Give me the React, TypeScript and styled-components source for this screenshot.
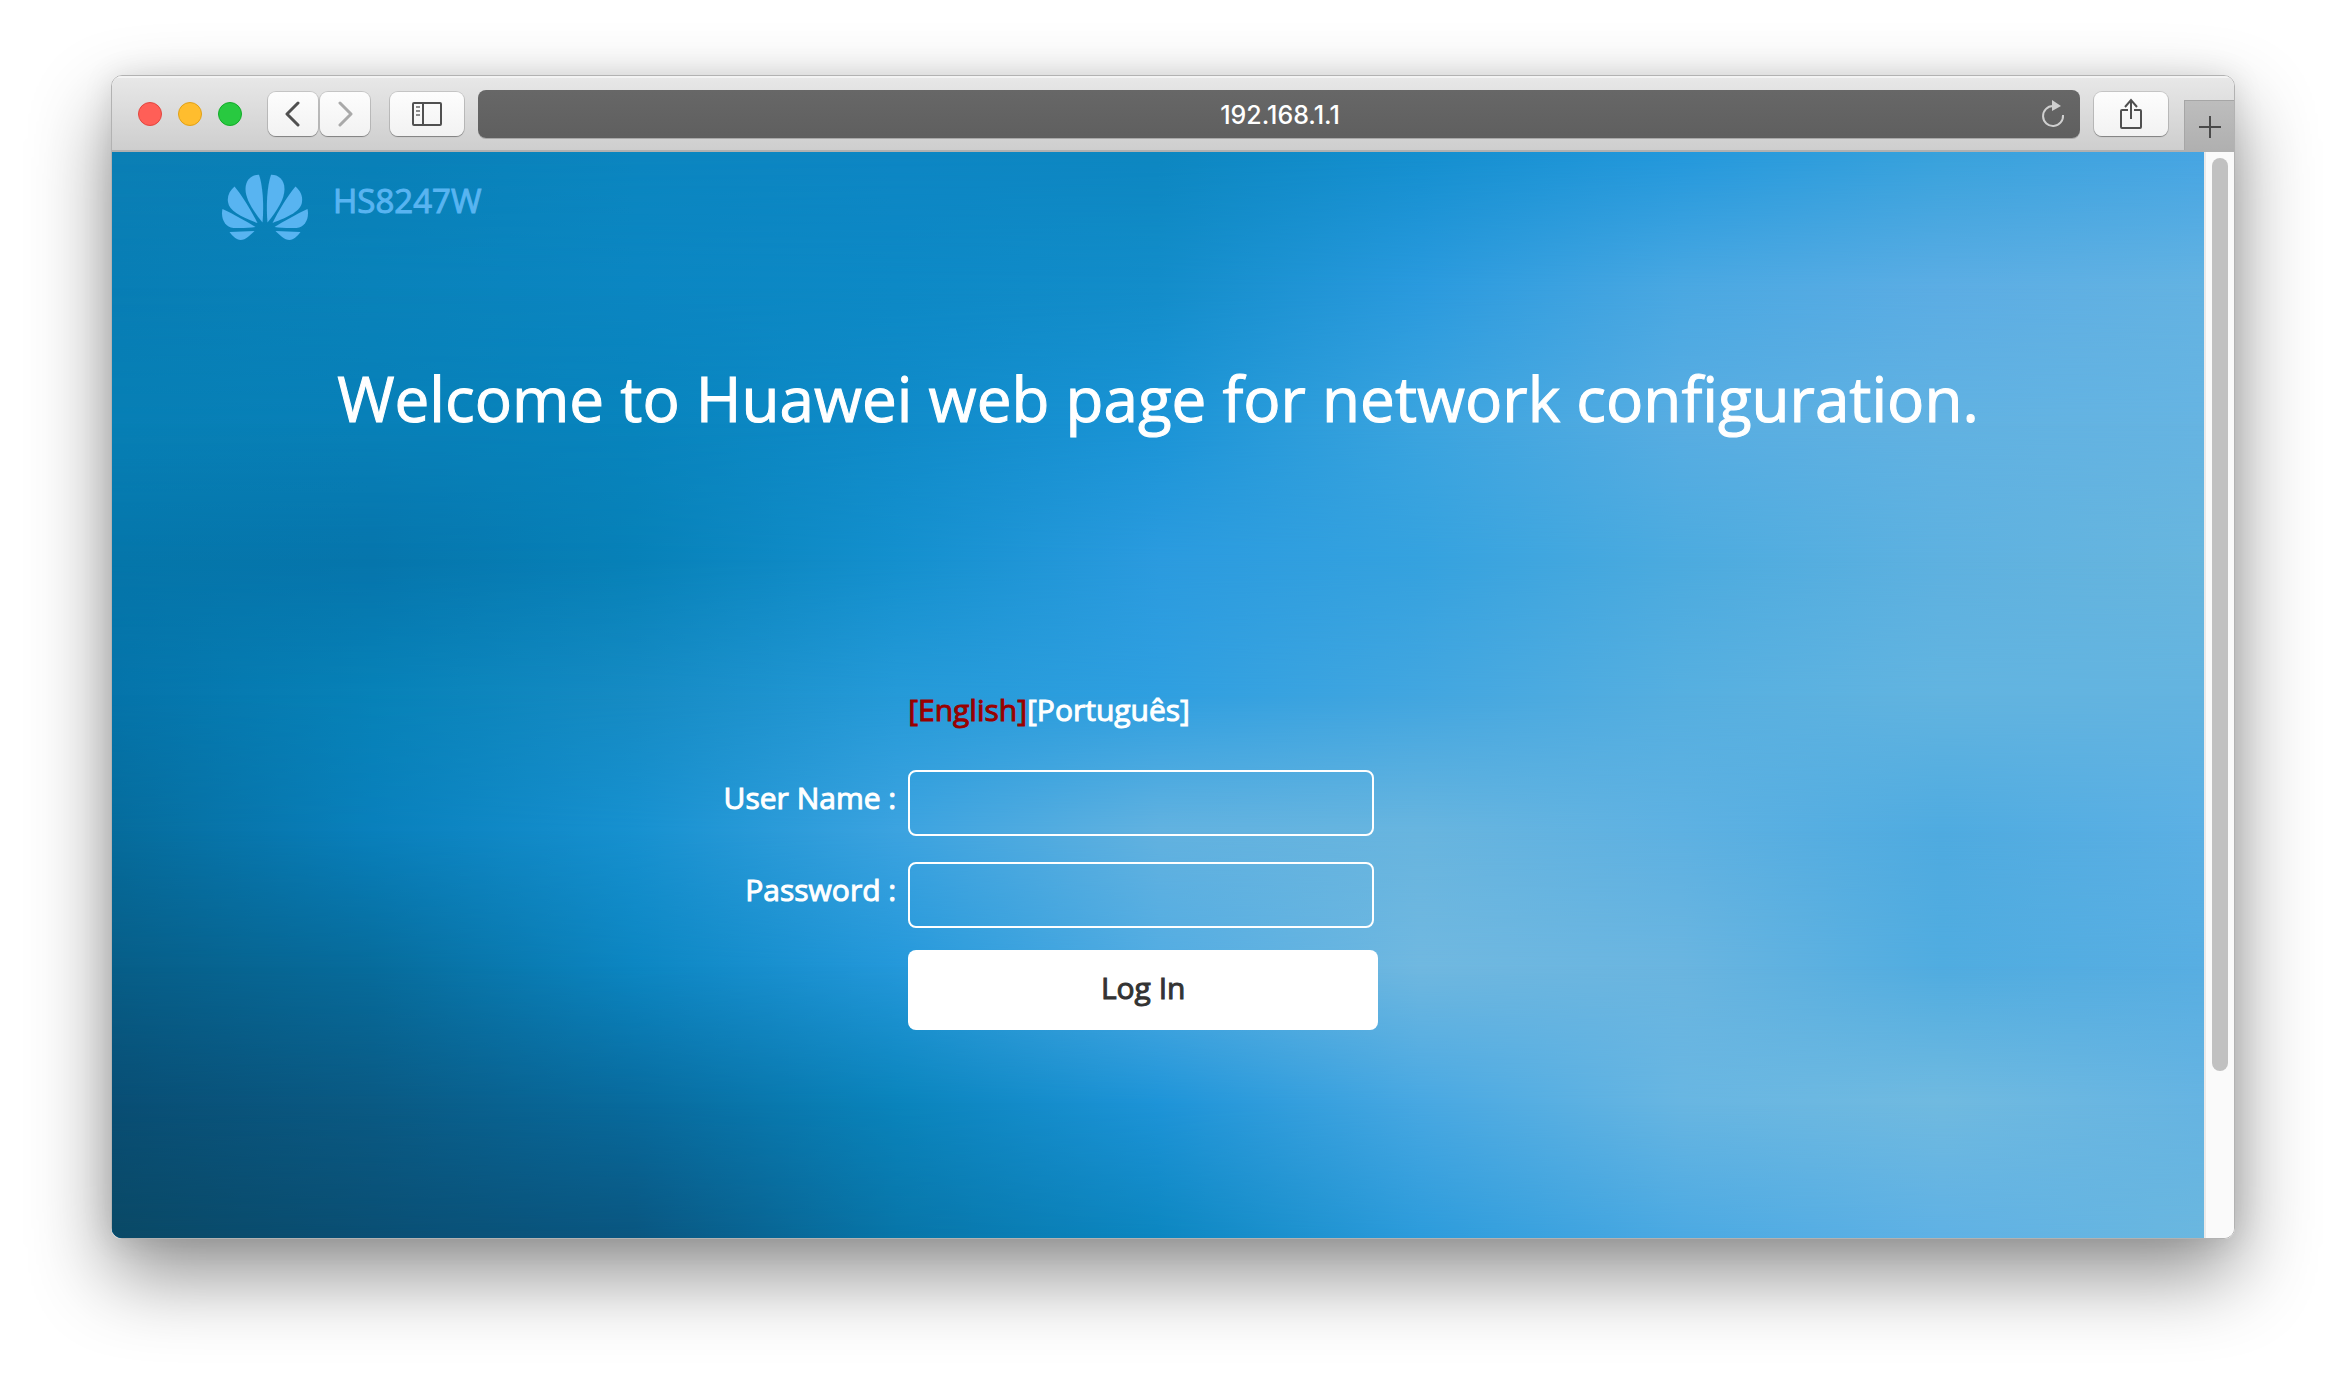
import React from "react";
import styled, { createGlobalStyle } from "styled-components";

const GlobalStyle = createGlobalStyle`
  *, *::before, *::after { box-sizing: border-box; }
  html, body { margin: 0; background: #ffffff; }
  button, input { font: inherit; color: inherit; }
`;

/* Colour mesh behind the login page: every row holds evenly spaced stops. */
const mesh: string[][] = [
  ["#0b7fb5", "#0980b8", "#0b86c0", "#0d86c4", "#0d87c1", "#148fcf", "#2398dc", "#38a2dc", "#46a5e3"],
  ["#087eb5", "#0982ba", "#0b86c2", "#0d89c6", "#138dca", "#2a9ade", "#4aa8e2", "#5cade4", "#64b3e2"],
  ["#077fb5", "#0880b8", "#0884bd", "#108bc9", "#1b94d6", "#3ba4df", "#58ade2", "#61b2e2", "#66b4e2"],
  ["#0576aa", "#0675ac", "#0781b8", "#1490ce", "#2b9bdf", "#35a2df", "#4cabdf", "#5eb1e0", "#68b6de"],
  ["#0574aa", "#0782b8", "#168bc4", "#259ad8", "#2f9fe0", "#42a6e0", "#56afe0", "#62b4e0", "#64b4e0"],
  ["#066c9c", "#0980bc", "#1791d0", "#3ca3e0", "#62b2e0", "#68b5df", "#5eb1e2", "#4fabe0", "#5cb0e4"],
  ["#075e88", "#076c9c", "#0c86c2", "#2498da", "#52ace2", "#70b8e0", "#6ab5e0", "#50ace0", "#58aee2"],
  ["#094e74", "#0a5a84", "#086b9e", "#0a84bc", "#1e94d8", "#48a8e2", "#68b6e2", "#70bae0", "#66b4e2"],
  ["#0a4966", "#0a4f74", "#0a5680", "#0875a8", "#0c86c0", "#2c9bdb", "#4ba9e2", "#5fb1e4", "#6ab7df"],
];

const Desktop = styled.main`
  display: flex;
  min-height: 100vh;
  padding: 75px 111px 147px;
  background: #ffffff;
`;

const BrowserWindow = styled.section`
  flex: 1;
  min-width: 0;
  display: flex;
  flex-direction: column;
  overflow: hidden;
  border: 1px solid #b2b2b2;
  border-radius: 11px;
  box-shadow: 0 36px 80px rgba(0, 0, 0, 0.44), 0 0 30px rgba(0, 0, 0, 0.1);
`;

const Toolbar = styled.header`
  display: flex;
  align-items: center;
  height: 76px;
  padding: 2px 0 0 26px;
  background: linear-gradient(#e8e8e8, #cecece);
  border-bottom: 2px solid #b0b0b0;
  box-shadow: inset 0 2px 0 #f3f3f3;
`;

const Lights = styled.div`
  display: flex;
  gap: 16px;
  margin-right: 26px;
`;

const Light = styled.button<{ $fill: string; $edge: string }>`
  width: 24px;
  height: 24px;
  padding: 0;
  border: 1px solid ${(p) => p.$edge};
  border-radius: 50%;
  background: ${(p) => p.$fill};
`;

const NavGroup = styled.nav`
  display: flex;
  gap: 2px;
  margin-right: 20px;
`;

const ToolButton = styled.button<{ $width: number }>`
  display: flex;
  align-items: center;
  justify-content: center;
  width: ${(p) => p.$width}px;
  height: 44px;
  padding: 0;
  border: 0;
  border-radius: 8px;
  color: #505050;
  background: linear-gradient(#fdfdfd, #f2f2f2);
  box-shadow: 0 0 0 1px rgba(0, 0, 0, 0.13), 0 1px 1px rgba(0, 0, 0, 0.3);

  &:disabled { color: #a9a9a9; }
`;

const AddressBar = styled.div`
  flex: 1;
  display: flex;
  align-items: center;
  height: 48px;
  margin: 0 14px;
  padding: 0 12px 0 44px;
  border-radius: 8px;
  color: #ffffff;
  background: linear-gradient(#676767, #5f5f5f);
  box-shadow: 0 1px 0 rgba(0, 0, 0, 0.2);
`;

const AddressInput = styled.input`
  flex: 1;
  min-width: 0;
  padding: 2px 0 0;
  border: 0;
  outline: 0;
  background: transparent;
  font-family: Inter, "Liberation Sans", sans-serif;
  font-size: 25px;
  font-weight: 500;
  line-height: 32px;
  text-align: center;
`;

const ReloadButton = styled.button`
  display: flex;
  align-items: center;
  justify-content: center;
  width: 30px;
  height: 30px;
  padding: 0;
  border: 0;
  color: #cfcfcf;
  background: transparent;
`;

const NewTabButton = styled.button`
  display: flex;
  align-items: center;
  justify-content: center;
  align-self: flex-end;
  width: 50px;
  height: 50px;
  margin-left: 16px;
  padding: 2px 0 0;
  border: 1px solid #a6a6a6;
  border-width: 1px 0 0 1px;
  color: #4a4a4a;
  background: linear-gradient(#bdbdbd, #b0b0b0);
`;

const Viewport = styled.div`
  flex: 1;
  display: flex;
`;

const Stage = styled.div`
  flex: 1;
  min-width: 0;
  display: grid;
`;

const MeshRow = styled.div<{ $row: number }>`
  grid-area: 1 / 1;
  background: linear-gradient(to right, ${(p) => mesh[p.$row].join(", ")});
  ${(p) =>
    p.$row > 0 &&
    `mask-image: linear-gradient(to bottom, transparent ${((p.$row - 1) * 100) / (mesh.length - 1)}%, #000 ${
      (p.$row * 100) / (mesh.length - 1)
    }%);`}
`;

const Page = styled.div`
  grid-area: 1 / 1;
  z-index: 1;
  color: #ffffff;
  font-family: "Open Sans", "Noto Sans", sans-serif;
  -webkit-text-stroke: 1px currentColor;
`;

const Brand = styled.div`
  display: flex;
  align-items: flex-start;
  gap: 24px;
  padding: 22px 0 0 109px;
  color: #58b4f1;
`;

const Model = styled.span`
  font-size: 33px;
  line-height: 54px;
`;

const Welcome = styled.h1`
  margin: 107px 0 0;
  font-size: 62px;
  font-weight: 400;
  line-height: 100px;
  text-align: center;
`;

const LoginForm = styled.form`
  display: flex;
  flex-direction: column;
  margin-top: 242px;
  font-size: 30px;
  line-height: 40px;
`;

const FormRow = styled.div<{ $gap: number }>`
  display: grid;
  grid-template-columns: 38% 1fr;
  align-items: center;
  margin-top: ${(p) => p.$gap}px;
  padding-left: 2px;
`;

const Label = styled.label`
  padding: 0 12px 10px 0;
  text-align: right;
`;

const Languages = styled.div`
  grid-column: 2;
`;

const LanguageLink = styled.a<{ $active?: boolean }>`
  color: ${(p) => (p.$active ? "#990000" : "#ffffff")};
  text-decoration: none;
`;

const TextField = styled.input`
  width: 466px;
  height: 66px;
  padding: 0 16px;
  border: 2px solid #ffffff;
  border-radius: 8px;
  outline: 0;
  background: transparent;
`;

const LoginButton = styled.button`
  grid-column: 2;
  width: 470px;
  height: 80px;
  padding: 0 0 4px;
  border: 0;
  border-radius: 8px;
  color: #333333;
  background: #ffffff;
`;

const ScrollTrack = styled.div`
  width: 30px;
  padding: 6px 0 0 6px;
  border-left: 2px solid #e9e9e9;
  background: #fafafa;
`;

const ScrollThumb = styled.div`
  width: 16px;
  height: 84.5%;
  border-radius: 8px;
  background: #c1c1c1;
`;

const Petals = () => (
  <g>
    <path d="M41 48.5C42.5 33 41.5 12 37.5.8C31 .5 24 5 24 15C24 25 31 36 41 48.5Z" />
    <path d="M36 49C30 37 21 22 13 12.5C8 17 5.5 22 6.5 28C7.5 37 20 43 36 49Z" />
    <path d="M34 53C24 47 12 40 1 35C-1 44 3 53 12 54C20 54.3 28 54 34 53Z" />
    <path d="M33 57L8 58C11 62 15 66 19 66C24 66 29 61 33 57Z" />
  </g>
);

const HuaweiLogo = () => (
  <svg width="88" height="67" viewBox="0 0 87 67" fill="currentColor" role="img" aria-label="Huawei">
    <Petals />
    <g transform="translate(87 0) scale(-1 1)">
      <Petals />
    </g>
  </svg>
);

const ChevronIcon = ({ flip }: { flip?: boolean }) => (
  <svg width="16" height="26" viewBox="0 0 16 26" fill="none" stroke="currentColor" strokeWidth="3" strokeLinecap="round" strokeLinejoin="round">
    <path d={flip ? "M3 2L14 13L3 24" : "M13 2L2 13L13 24"} />
  </svg>
);

const SidebarIcon = () => (
  <svg width="30" height="24" viewBox="0 0 30 24" fill="none" stroke="currentColor" strokeWidth="2">
    <rect x="1" y="1" width="28" height="22" rx="1" />
    <path d="M11 1V23" />
    <path d="M4 5H8M4 9H8M4 13H8" stroke="#8c8c8c" />
  </svg>
);

const ReloadIcon = () => (
  <svg width="24" height="28" viewBox="0 0 24 28" fill="none" stroke="currentColor" strokeWidth="2">
    <path d="M22 15A10 10 0 1 1 12 6" />
    <path d="M11 0L20 6L11 11Z" fill="currentColor" stroke="none" />
  </svg>
);

const ShareIcon = () => (
  <svg width="24" height="32" viewBox="0 0 24 32" fill="none" stroke="currentColor" strokeWidth="2">
    <path d="M9 12H3Q2 12 2 13V29Q2 30 3 30H21Q22 30 22 29V13Q22 12 21 12H15" />
    <path d="M12 21V3M6 9L12 2L18 9" />
  </svg>
);

const PlusIcon = () => (
  <svg width="22" height="22" viewBox="0 0 22 22" stroke="currentColor" strokeWidth="2">
    <path d="M11 0V22M0 11H22" />
  </svg>
);

export default function App() {
  return (
    <>
      <GlobalStyle />
      <Desktop>
        <BrowserWindow>
          <Toolbar>
            <Lights>
              <Light aria-label="Close" $fill="#ff5f57" $edge="#e2463f" />
              <Light aria-label="Minimise" $fill="#ffbd2e" $edge="#e1a116" />
              <Light aria-label="Zoom" $fill="#28c940" $edge="#12ac28" />
            </Lights>
            <NavGroup>
              <ToolButton $width={50} aria-label="Back">
                <ChevronIcon />
              </ToolButton>
              <ToolButton $width={50} aria-label="Forward" disabled>
                <ChevronIcon flip />
              </ToolButton>
            </NavGroup>
            <ToolButton $width={74} aria-label="Show sidebar">
              <SidebarIcon />
            </ToolButton>
            <AddressBar>
              <AddressInput aria-label="Address" defaultValue="192.168.1.1" />
              <ReloadButton aria-label="Reload">
                <ReloadIcon />
              </ReloadButton>
            </AddressBar>
            <ToolButton $width={74} aria-label="Share">
              <ShareIcon />
            </ToolButton>
            <NewTabButton aria-label="New tab">
              <PlusIcon />
            </NewTabButton>
          </Toolbar>
          <Viewport>
            <Stage>
              {mesh.map((_, row) => (
                <MeshRow key={row} $row={row} />
              ))}
              <Page>
                <Brand>
                  <HuaweiLogo />
                  <Model>HS8247W</Model>
                </Brand>
                <Welcome>Welcome to Huawei web page for network configuration.</Welcome>
                <LoginForm onSubmit={(e) => e.preventDefault()}>
                  <FormRow $gap={0}>
                    <Languages>
                      <LanguageLink href="#en" $active>[English]</LanguageLink>
                      <LanguageLink href="#pt">[Português]</LanguageLink>
                    </Languages>
                  </FormRow>
                  <FormRow $gap={40}>
                    <Label htmlFor="username">User Name :</Label>
                    <TextField id="username" type="text" />
                  </FormRow>
                  <FormRow $gap={26}>
                    <Label htmlFor="password">Password :</Label>
                    <TextField id="password" type="password" />
                  </FormRow>
                  <FormRow $gap={22}>
                    <LoginButton type="submit">Log In</LoginButton>
                  </FormRow>
                </LoginForm>
              </Page>
            </Stage>
            <ScrollTrack>
              <ScrollThumb />
            </ScrollTrack>
          </Viewport>
        </BrowserWindow>
      </Desktop>
    </>
  );
}
